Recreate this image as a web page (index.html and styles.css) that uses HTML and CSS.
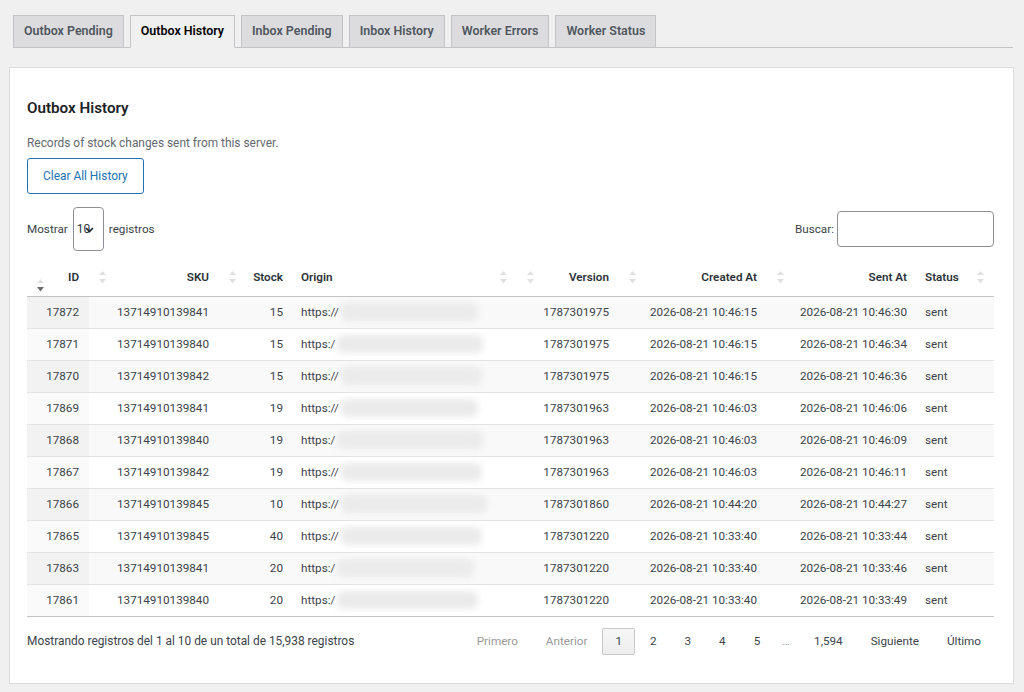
FILE: index.html
```html
<!DOCTYPE html>
<html lang="es">
<head>
<meta charset="utf-8">
<title>Outbox History</title>
<link rel="stylesheet" href="styles.css">
</head>
<body>
<nav class="tabs">
  <a class="tab">Outbox Pending</a>
  <a class="tab active">Outbox History</a>
  <a class="tab">Inbox Pending</a>
  <a class="tab">Inbox History</a>
  <a class="tab">Worker Errors</a>
  <a class="tab">Worker Status</a>
</nav>

<section class="card">
  <h2 class="title">Outbox History</h2>
  <p class="desc">Records of stock changes sent from this server.</p>
  <button class="btn">Clear All History</button>

  <div class="controls">
    <div class="length">
      <span>Mostrar</span>
      <span class="select">10<svg class="chev" width="9" height="6" viewBox="0 0 9 6"><polyline points="1,1 4.5,4.5 8,1" fill="none" stroke="#1d2327" stroke-width="1.6"/></svg></span>
      <span>registros</span>
    </div>
    <label class="search"><span>Buscar:</span><span class="input"></span></label>
  </div>

  <table class="grid">
    <colgroup>
      <col class="c-id"><col class="c-sku"><col class="c-stock"><col class="c-origin">
      <col class="c-version"><col class="c-created"><col class="c-sent"><col class="c-status">
    </colgroup>
    <thead>
      <tr>
        <th class="num"><div class="hd"><svg class="sort desc" width="7" height="13" viewBox="0 0 7 13"><polygon class="up" points="0,4 3.5,0 7,4"/><polygon class="dn" points="0,8 7,8 3.5,12.5"/></svg><span class="ht">ID</span></div></th>
        <th class="num"><div class="hd"><svg class="sort" width="7" height="13" viewBox="0 0 7 13"><polygon class="up" points="0,4 3.5,0 7,4"/><polygon class="dn" points="0,8 7,8 3.5,12.5"/></svg><span class="ht">SKU</span></div></th>
        <th class="num"><div class="hd"><svg class="sort" width="7" height="13" viewBox="0 0 7 13"><polygon class="up" points="0,4 3.5,0 7,4"/><polygon class="dn" points="0,8 7,8 3.5,12.5"/></svg><span class="ht">Stock</span></div></th>
        <th><div class="hd"><span class="ht">Origin</span><svg class="sort" width="7" height="13" viewBox="0 0 7 13"><polygon class="up" points="0,4 3.5,0 7,4"/><polygon class="dn" points="0,8 7,8 3.5,12.5"/></svg></div></th>
        <th class="num"><div class="hd"><svg class="sort" width="7" height="13" viewBox="0 0 7 13"><polygon class="up" points="0,4 3.5,0 7,4"/><polygon class="dn" points="0,8 7,8 3.5,12.5"/></svg><span class="ht">Version</span></div></th>
        <th class="num"><div class="hd"><svg class="sort" width="7" height="13" viewBox="0 0 7 13"><polygon class="up" points="0,4 3.5,0 7,4"/><polygon class="dn" points="0,8 7,8 3.5,12.5"/></svg><span class="ht">Created At</span></div></th>
        <th class="num"><div class="hd"><svg class="sort" width="7" height="13" viewBox="0 0 7 13"><polygon class="up" points="0,4 3.5,0 7,4"/><polygon class="dn" points="0,8 7,8 3.5,12.5"/></svg><span class="ht">Sent At</span></div></th>
        <th><div class="hd"><span class="ht">Status</span><svg class="sort" width="7" height="13" viewBox="0 0 7 13"><polygon class="up" points="0,4 3.5,0 7,4"/><polygon class="dn" points="0,8 7,8 3.5,12.5"/></svg></div></th>
      </tr>
    </thead>
    <tbody>
      <tr><td class="num sorted">17872</td><td class="num">13714910139841</td><td class="num">15</td><td>https://<span class="blur b1"></span></td><td class="num">1787301975</td><td class="num">2026-08-21 10:46:15</td><td class="num">2026-08-21 10:46:30</td><td>sent</td></tr>
      <tr><td class="num sorted">17871</td><td class="num">13714910139840</td><td class="num">15</td><td>https:/<span class="blur b2"></span></td><td class="num">1787301975</td><td class="num">2026-08-21 10:46:15</td><td class="num">2026-08-21 10:46:34</td><td>sent</td></tr>
      <tr><td class="num sorted">17870</td><td class="num">13714910139842</td><td class="num">15</td><td>https://<span class="blur b3"></span></td><td class="num">1787301975</td><td class="num">2026-08-21 10:46:15</td><td class="num">2026-08-21 10:46:36</td><td>sent</td></tr>
      <tr><td class="num sorted">17869</td><td class="num">13714910139841</td><td class="num">19</td><td>https://<span class="blur b1"></span></td><td class="num">1787301963</td><td class="num">2026-08-21 10:46:03</td><td class="num">2026-08-21 10:46:06</td><td>sent</td></tr>
      <tr><td class="num sorted">17868</td><td class="num">13714910139840</td><td class="num">19</td><td>https:/<span class="blur b2"></span></td><td class="num">1787301963</td><td class="num">2026-08-21 10:46:03</td><td class="num">2026-08-21 10:46:09</td><td>sent</td></tr>
      <tr><td class="num sorted">17867</td><td class="num">13714910139842</td><td class="num">19</td><td>https://<span class="blur b3"></span></td><td class="num">1787301963</td><td class="num">2026-08-21 10:46:03</td><td class="num">2026-08-21 10:46:11</td><td>sent</td></tr>
      <tr><td class="num sorted">17866</td><td class="num">13714910139845</td><td class="num">10</td><td>https://<span class="blur b2"></span></td><td class="num">1787301860</td><td class="num">2026-08-21 10:44:20</td><td class="num">2026-08-21 10:44:27</td><td>sent</td></tr>
      <tr><td class="num sorted">17865</td><td class="num">13714910139845</td><td class="num">40</td><td>https://<span class="blur b3"></span></td><td class="num">1787301220</td><td class="num">2026-08-21 10:33:40</td><td class="num">2026-08-21 10:33:44</td><td>sent</td></tr>
      <tr><td class="num sorted">17863</td><td class="num">13714910139841</td><td class="num">20</td><td>https:/<span class="blur b1"></span></td><td class="num">1787301220</td><td class="num">2026-08-21 10:33:40</td><td class="num">2026-08-21 10:33:46</td><td>sent</td></tr>
      <tr><td class="num sorted">17861</td><td class="num">13714910139840</td><td class="num">20</td><td>https:/<span class="blur b3"></span></td><td class="num">1787301220</td><td class="num">2026-08-21 10:33:40</td><td class="num">2026-08-21 10:33:49</td><td>sent</td></tr>
    </tbody>
  </table>

  <div class="footer">
    <div class="info">Mostrando registros del 1 al 10 de un total de 15,938 registros</div>
    <nav class="paging">
      <span class="pg disabled">Primero</span>
      <span class="pg disabled">Anterior</span>
      <span class="pg current">1</span>
      <span class="pg">2</span>
      <span class="pg">3</span>
      <span class="pg">4</span>
      <span class="pg">5</span>
      <span class="ellipsis">…</span>
      <span class="pg">1,594</span>
      <span class="pg">Siguiente</span>
      <span class="pg">Último</span>
    </nav>
  </div>
</section>
</body>
</html>
```

FILE: styles.css
```css
* { box-sizing: border-box; }

body {
  margin: 0;
  background: #f0f0f1;
  font-family: Roboto, "Liberation Sans", sans-serif;
  font-size: 11.7px;
  color: #3c434a;
}

/* tabs */
.tabs {
  display: flex;
  margin: 15px 11px 0 13px;
  border-bottom: 1px solid #c3c4c7;
}
.tab {
  margin: 0 6px -1px 0;
  padding: 5px 10px 6px;
  line-height: 20px;
  font-size: 12.45px;
  font-weight: 600;
  color: #50575e;
  background: #dcdcde;
  border: 1px solid #c3c4c7;
  cursor: pointer;
}
.tab.active {
  background: #f0f0f1;
  color: #000;
  border-bottom-color: #f0f0f1;
}

/* card */
.card {
  margin: 19px 10px 0 9px;
  background: #fff;
  border: 1px solid #dcdcde;
  padding: 30px 19px 28px 17px;
}
.title {
  margin: 0;
  font-size: 15.2px;
  line-height: 20px;
  font-weight: 600;
  color: #1d2327;
}
.desc {
  margin: 16px 0 0;
  line-height: 18px;
  font-size: 11.9px;
  color: #646970;
}
.btn {
  display: block;
  margin-top: 6px;
  height: 36px;
  padding: 0 15px;
  border: 1px solid #2271b1;
  border-radius: 3px;
  background: #fff;
  color: #2271b1;
  font-family: inherit;
  font-size: 11.9px;
}

/* controls */
.controls {
  margin-top: 13px;
  height: 44px;
  display: flex;
  justify-content: space-between;
  align-items: center;
}
.length {
  display: flex;
  align-items: center;
  gap: 5px;
  color: #3c434a;
}
.select {
  position: relative;
  width: 31px;
  height: 44px;
  border: 1px solid #8c8f94;
  border-radius: 4px;
  padding-left: 3px;
  line-height: 42px;
  color: #2c3338;
  font-size: 12px;
}
.chev {
  position: absolute;
  left: 11px;
  top: 19px;
}
.search {
  display: flex;
  align-items: center;
  gap: 3px;
  color: #3c434a;
}
.input {
  width: 157px;
  height: 36px;
  border: 1px solid #8c8f94;
  border-radius: 4px;
  background: #fff;
}

/* table */
.grid {
  margin-top: 9px;
  width: 100%;
  border-collapse: collapse;
  table-layout: fixed;
}
.c-id { width: 62px; }
.c-sku { width: 130px; }
.c-stock { width: 74px; }
.c-origin { width: 224px; }
.c-version { width: 102px; }
.c-created { width: 148px; }
.c-sent { width: 150px; }
.c-status { width: 77px; }

.grid th {
  height: 36px;
  padding: 0 10px 0 8px;
  font-weight: 600;
  color: #2c3338;
  text-align: left;
  vertical-align: middle;
  border-bottom: 1px solid #c4c4c4;
}
.grid th.num { padding-left: 10px; }
.hd {
  display: flex;
  justify-content: space-between;
  align-items: center;
  height: 19px;
}
.ht { line-height: 19px; }
.sort {
  display: block;
  flex: none;
}
.sort .up, .sort .dn { fill: #e0e0e0; }
.sort.desc .dn { fill: #6b6b6b; }

.grid td {
  padding: 6px 10px 6px 8px;
  line-height: 19px;
  color: #3c434a;
  border-bottom: 1px solid #e3e3e3;
  white-space: nowrap;
}
.grid td.num { text-align: right; }
.grid tbody tr:nth-child(odd) td { background: #f9f9f9; }
.grid tbody tr:nth-child(odd) td.sorted { background: #f2f2f2; }
.grid tbody tr:nth-child(even) td.sorted { background: #fafafa; }
.grid tbody tr:last-child td { border-bottom-color: #c4c4c4; }

.blur {
  display: inline-block;
  height: 18px;
  margin-left: 2px;
  vertical-align: middle;
  background: #ebebeb;
  border-radius: 6px;
  filter: blur(3px);
}
.b1 { width: 137px; }
.b2 { width: 146px; }
.b3 { width: 141px; }

/* footer */
.footer {
  margin-top: 11px;
  display: flex;
  justify-content: space-between;
  align-items: center;
}
.info { color: #3c434a; font-size: 11.9px; }
.paging {
  display: flex;
  align-items: center;
}
.pg {
  margin-left: 2px;
  padding: 4px 12px;
  line-height: 17px;
  border: 1px solid transparent;
  border-radius: 2px;
  color: #3c434a;
}
.pg.disabled { color: #999; }
.pg.current {
  border-color: #c8c8c8;
  background: linear-gradient(#f7f7f7, #ededed);
}
.ellipsis {
  padding: 0 9px;
  color: #999;
}
```
